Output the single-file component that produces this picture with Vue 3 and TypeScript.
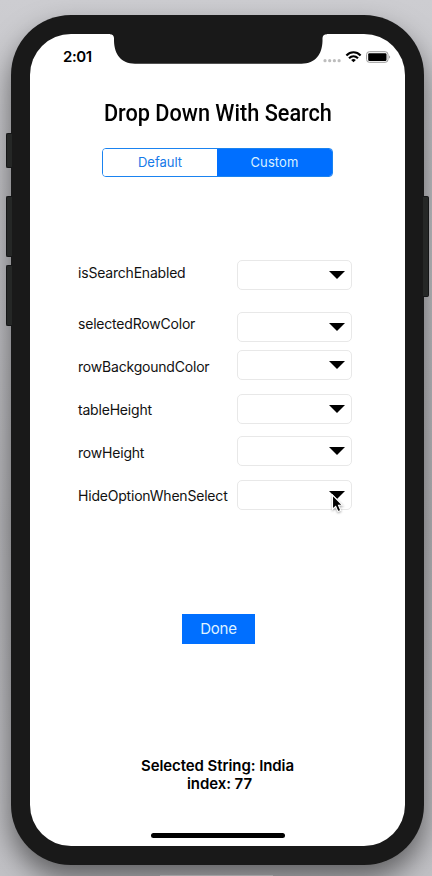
<script setup lang="ts">
import { ref } from 'vue'

interface Option {
  name: string
  labelGap: number
  fieldGap: number
}

const segments: string[] = ['Default', 'Custom']
const active = ref<string>('Custom')
const options: Option[] = [
  { name: 'isSearchEnabled', labelGap: 0, fieldGap: 0 },
  { name: 'selectedRowColor', labelGap: 30, fieldGap: 22 },
  { name: 'rowBackgoundColor', labelGap: 22, fieldGap: 8 },
  { name: 'tableHeight', labelGap: 22, fieldGap: 14 },
  { name: 'rowHeight', labelGap: 22, fieldGap: 12 },
  { name: 'HideOptionWhenSelect', labelGap: 22, fieldGap: 14 },
]
const selected = { name: 'India', index: 77 }
</script>

<template>
  <div class="desktop">
    <i class="key mute"></i>
    <i class="key vol-up"></i>
    <i class="key vol-down"></i>
    <i class="key power"></i>
    <div class="phone">
      <main class="screen">
        <svg class="notch" width="217" height="31" viewBox="0 0 217 31" aria-hidden="true">
          <path d="M0 0V.2C2.6.2 3.8 1.6 4 4V7C4.4 20.5 11 29.5 25 29.7H191.5C205.5 29.5 212.1 20.5 212.5 7V4C212.7 1.6 213.9.2 217 .2V0Z" fill="#191919" />
        </svg>
        <header class="status">
          <span class="time">2:01</span>
          <svg class="indicators" width="68" height="14" viewBox="0 0 68 14" aria-hidden="true">
            <g fill="#bdbdbd">
              <circle cx="2" cy="10.7" r="1.6" />
              <circle cx="6.7" cy="10.7" r="1.6" />
              <circle cx="11.4" cy="10.7" r="1.6" />
              <circle cx="16.1" cy="10.7" r="1.6" />
            </g>
            <g fill="none" stroke="#000" stroke-width="2.2">
              <path d="M23.4 5.4C27.5 1.2 33.5 1.2 37.6 5.4" />
              <path d="M26 8.3C28.7 5.7 32.3 5.7 35 8.3" />
            </g>
            <path d="M28.1 9.9Q30.5 8 32.9 9.9L30.5 12.3Z" />
            <rect x="43.6" y="1.7" width="21.4" height="10.6" rx="2.8" fill="none" stroke="#999" />
            <rect x="45.2" y="3.2" width="18.3" height="7.7" rx="1.2" />
            <path d="M66.3 5.2Q68 7 66.3 8.8Z" fill="#777" />
          </svg>
        </header>

        <h1 class="title">Drop Down With Search</h1>

        <div class="segmented">
          <button
            v-for="s in segments"
            :key="s"
            class="segment"
            :class="{ on: active === s }"
            @click="active = s"
          >{{ s }}</button>
        </div>

        <section class="options">
          <div class="labels">
            <div v-for="o in options" :key="o.name" class="label" :style="{ marginTop: o.labelGap + 'px' }">
              {{ o.name }}
            </div>
          </div>
          <div class="fields">
            <div v-for="o in options" :key="o.name" class="field" :style="{ marginTop: o.fieldGap + 'px' }">
              <svg width="16" height="8" viewBox="0 0 16 8" aria-hidden="true"><path d="M0 0H16L8 8Z" /></svg>
            </div>
          </div>
        </section>

        <button class="done">Done</button>

        <div class="result">
          <p>Selected String: {{ selected.name }}</p>
          <p class="index">index: {{ selected.index }}</p>
        </div>
        <div class="home"></div>
      </main>
    </div>
    <svg class="cursor" width="14" height="20" viewBox="0 0 14 20" aria-hidden="true">
      <path d="M1.5 1V15.2L4.7 12.3L7 17.6L9.8 16.4L7.5 11.3H11.6Z" fill="#000" stroke="#fff" stroke-width="1.1" />
    </svg>
    <i class="dock"></i>
  </div>
</template>

<style>
body {
  margin: 0;
  overflow: hidden;
}
</style>

<style scoped>
.desktop {
  position: relative;
  box-sizing: border-box;
  width: 432px;
  height: 876px;
  padding: 15px 8px 11px 11px;
  overflow: hidden;
  background: linear-gradient(#cdcdd1, #c4c4c8 20%, #b8b8bc 60%, #c2c2c6);
  font-family: Inter, 'Liberation Sans', sans-serif;
  color: #000;
}
.phone {
  position: relative;
  box-sizing: border-box;
  width: 413px;
  height: 850px;
  padding: 19px;
  border-radius: 60px;
  background: #191919;
  box-shadow: 0 14px 28px rgba(0, 0, 0, 0.5);
}
.screen {
  position: relative;
  display: flex;
  flex-direction: column;
  align-items: center;
  height: 812px;
  border-radius: 41px;
  background: #fff;
}
.notch {
  position: absolute;
  top: 0;
  left: 79.5px;
}
.key {
  position: absolute;
  z-index: 1;
  left: 6px;
  box-sizing: border-box;
  width: 6px;
  border: 1px solid #151617;
  border-right: 0;
  border-radius: 2px 0 0 2px;
  background: #252726;
}
.mute { top: 133px; height: 35px; }
.vol-up { top: 196px; height: 61px; }
.vol-down { top: 265px; height: 61px; }
.power {
  top: 196px;
  left: 423px;
  height: 101px;
  border: 1px solid #151617;
  border-left: 0;
  border-radius: 0 2px 2px 0;
}
.status {
  display: flex;
  align-self: stretch;
  justify-content: space-between;
  height: 20px;
  padding: 14px 14px 0 33px;
}
.time {
  font-size: 15px;
  font-weight: 600;
  line-height: 18px;
  letter-spacing: -0.4px;
}
.indicators {
  margin-top: 2px;
}
.title {
  margin: 32px 0 0;
  font: 500 23px/28px Roboto, sans-serif;
  white-space: nowrap;
  transform: scaleX(0.943);
}
.segmented {
  display: grid;
  grid-template-columns: 114px 115px;
  box-sizing: border-box;
  width: 231px;
  height: 29px;
  margin-top: 20px;
  border: 1px solid #1a83f0;
  border-radius: 4px;
  overflow: hidden;
}
.segment {
  padding: 0;
  border: 0;
  background: #fff;
  color: #1679e8;
  font: 400 13px/27px Inter, sans-serif;
}
.segment.on {
  background: #006fff;
  color: #d9efff;
  letter-spacing: 0.1px;
}
.options {
  display: flex;
  align-self: stretch;
  justify-content: space-between;
  margin-top: 83px;
  padding: 0 53px 0 48px;
}
.labels {
  padding-top: 3px;
}
.label {
  height: 21px;
  font-size: 14px;
  line-height: 20px;
  letter-spacing: -0.2px;
  color: #111;
  white-space: nowrap;
}
.field {
  display: flex;
  align-items: center;
  justify-content: flex-end;
  box-sizing: border-box;
  width: 115px;
  height: 30px;
  padding-right: 6px;
  border: 1px solid #e8e8e8;
  border-radius: 5px;
}
.done {
  width: 73px;
  height: 30px;
  margin: 104px 0 0 2px;
  padding: 0;
  border: 0;
  background: #006fff;
  color: #dff2ff;
  font: 400 15px/30px Inter, sans-serif;
  letter-spacing: -0.2px;
}
.result {
  margin-top: 113px;
  font-size: 15px;
  font-weight: 600;
  line-height: 18px;
  letter-spacing: -0.08px;
  text-align: center;
}
.result p {
  margin: 0;
}
.result .index {
  padding-left: 4px;
}
.home {
  width: 134px;
  height: 5px;
  margin: auto 0 8px;
  border-radius: 3px;
  background: #000;
}
.cursor {
  position: absolute;
  top: 494px;
  left: 331px;
  filter: drop-shadow(0 1px 1px rgba(0, 0, 0, 0.35));
}
.dock {
  position: absolute;
  bottom: 0;
  left: 160px;
  width: 113px;
  height: 1px;
  background: #a0a0a2;
}
</style>
